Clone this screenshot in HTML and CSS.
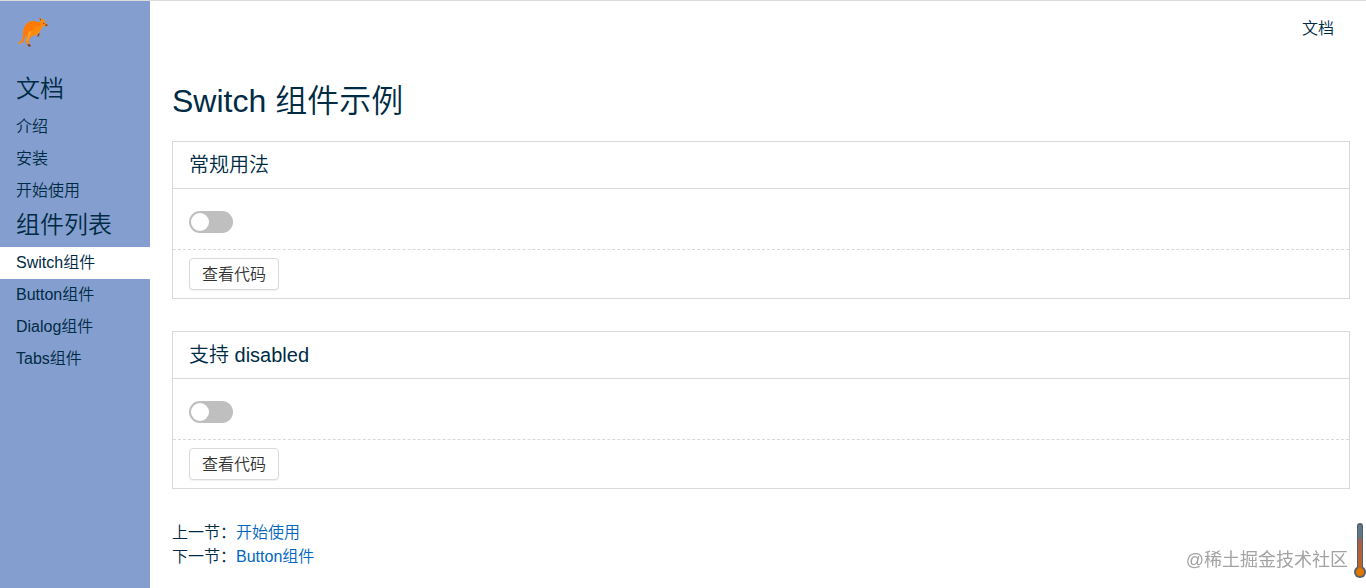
FILE: index.html
```
<!DOCTYPE html>
<html lang="zh-CN">
<head>
    <meta charset="utf-8">
    <meta name="viewport" content="width=device-width, initial-scale=1">
    <title>Switch 组件示例</title>
    <link rel="stylesheet" href="styles.css">
</head>

<body>
<div class="layout">
    <aside>
        <a class="logo" href="#" aria-label="首页">
            <svg viewBox="0 0 96 96" width="32" height="32">
                <path fill="#ff8a0a" d="M6 76 C18 76 18 66 21 52 C22 28 33 14 48 12 C58 11 64 16 69 16 C72 14 72 12 73 11 L69 3 C75 3 79 6 80 9 L84 6 C87 10 86 14 85 16 L94 22 C96 26 93 29 88 28 L80 28 C75 37 72 44 67 50 L70 53 L66 58 L62 53 C52 54 48 58 43 62 L38 73 L42 85 L36 87 L29 73 L33 59 L29 54 C25 67 23 80 11 80 C8 80 5 79 6 76 Z"/>
                <path fill="#ff7b05" d="M21 52 C22 28 33 14 48 12 C57 11 63 16 69 16 L76 20 C70 28 62 30 57 30 C50 42 40 44 34 59 L29 54 C25 67 23 76 13 79 C20 71 20 62 21 52 Z"/>
                <path fill="#ffa02b" d="M37 45 C43 40 48 44 45 50 L39 60 L35 71 L32 71 L35 59 Z"/>
                <path fill="#7e4433" d="M35 82 L41 81 L45 87 L42 89 L35 87 Z M65 51 L71 49 L69 58 L62 59 L66 55 Z M89 20 L95 23 L93 28 L88 27 Z M70 3 L75 6 L74 12 Z"/>
                <circle cx="83" cy="19" r="2" fill="#593c31"/>
            </svg>
        </a>
        <h2>文档</h2>
        <ol>
            <li><a href="#">介绍</a></li>
            <li><a href="#">安装</a></li>
            <li><a href="#">开始使用</a></li>
        </ol>
        <h2>组件列表</h2>
        <ol>
            <li><a class="active" href="#">Switch组件</a></li>
            <li><a href="#">Button组件</a></li>
            <li><a href="#">Dialog组件</a></li>
            <li><a href="#">Tabs组件</a></li>
        </ol>
    </aside>

    <div class="content">
        <nav class="topnav">
            <a href="#">文档</a>
        </nav>
        <main>
            <h1>Switch 组件示例</h1>
            <section class="demo">
                <h2>常规用法</h2>
                <div class="demo-component">
                    <button type="button" class="switch" role="switch" aria-checked="false" aria-label="常规用法"><span></span></button>
                </div>
                <div class="demo-actions">
                    <button type="button" class="button">查看代码</button>
                </div>
            </section>
            <section class="demo">
                <h2>支持 disabled</h2>
                <div class="demo-component">
                    <button type="button" class="switch" role="switch" aria-checked="false" aria-label="支持 disabled" disabled><span></span></button>
                </div>
                <div class="demo-actions">
                    <button type="button" class="button">查看代码</button>
                </div>
            </section>
            <div class="pager">
                <p>上一节：<a href="#">开始使用</a></p>
                <p>下一节：<a href="#">Button组件</a></p>
            </div>
        </main>
    </div>
</div>

<div class="watermark">@稀土掘金技术社区</div>
<svg class="thermometer" viewBox="0 0 12 56" width="12" height="56" aria-hidden="true">
    <defs>
        <linearGradient id="tube" x1="0" y1="0" x2="0" y2="1">
            <stop offset="0" stop-color="#607988"/>
            <stop offset="0.28" stop-color="#607580"/>
            <stop offset="0.36" stop-color="#a85a50"/>
            <stop offset="1" stop-color="#b86824"/>
        </linearGradient>
    </defs>
    <circle cx="6" cy="49" r="6" fill="#566068"/>
    <rect x="3" y="0" width="6" height="48" rx="3" fill="#566068"/>
    <rect x="4" y="2" width="4" height="44" rx="2" fill="url(#tube)"/>
    <circle cx="6" cy="49" r="4" fill="#e07800"/>
</svg>
</body>
</html>
```

FILE: styles.css
```
* {
    margin: 0;
    padding: 0;
    box-sizing: border-box;
}

body {
    font-family: "Liberation Sans", "Noto Sans CJK SC", sans-serif;
    font-size: 16px;
    font-weight: 350;
    line-height: 24px;
    color: #002b45;
    background: #fff;
}

ol {
    list-style: none;
}

a {
    color: inherit;
    text-decoration: none;
}

h1, h2 {
    font-weight: 350;
}

.layout {
    display: flex;
    min-height: 100vh;
    border-top: 1px solid #dcdcdc;
}

/* sidebar */
aside {
    flex-shrink: 0;
    width: 150px;
    padding: 16px 0;
    background: #849fcf;
}

.logo {
    display: block;
    width: 32px;
    height: 32px;
    margin: 0 16px 22px;
}

.logo svg {
    display: block;
}

aside h2 {
    font-size: 24px;
    line-height: 36px;
    padding: 0 16px;
    margin-bottom: 4px;
}

aside li a {
    display: block;
    padding: 4px 16px;
}

aside .active {
    background: #fff;
}

/* right side */
.content {
    flex: 1;
    min-width: 0;
}

.topnav {
    display: flex;
    justify-content: flex-end;
    padding: 16px 32px;
}

main {
    padding: 20px 16px 16px 22px;
}

h1 {
    font-size: 32px;
    line-height: 48px;
    margin-bottom: 16px;
}

.demo {
    border: 1px solid #d9d9d9;
    margin-bottom: 32px;
}

.demo h2 {
    font-size: 20px;
    line-height: 30px;
    padding: 8px 16px;
    border-bottom: 1px solid #d9d9d9;
}

.demo-component {
    padding: 22px 16px 16px;
}

.demo-actions {
    padding: 8px 16px;
    border-top: 1px dashed #d9d9d9;
}

.switch {
    display: block;
    width: 44px;
    height: 22px;
    padding: 2px;
    border: none;
    border-radius: 11px;
    background: #bfbfbf;
}

.switch span {
    display: block;
    width: 18px;
    height: 18px;
    border-radius: 9px;
    background: #fff;
}

.button {
    display: block;
    height: 32px;
    padding: 2px 12px 0;
    font: inherit;
    color: #333;
    background: #fff;
    border: 1px solid #d9d9d9;
    border-radius: 4px;
    box-shadow: 0 1px 1px rgba(0, 0, 0, 0.06);
}

.pager a {
    color: #0066bf;
}

.watermark {
    position: fixed;
    right: 18px;
    bottom: 16px;
    font-size: 18px;
    font-weight: 400;
    color: #a3a3a3;
}

.thermometer {
    position: fixed;
    right: 0;
    bottom: 9px;
}
```
